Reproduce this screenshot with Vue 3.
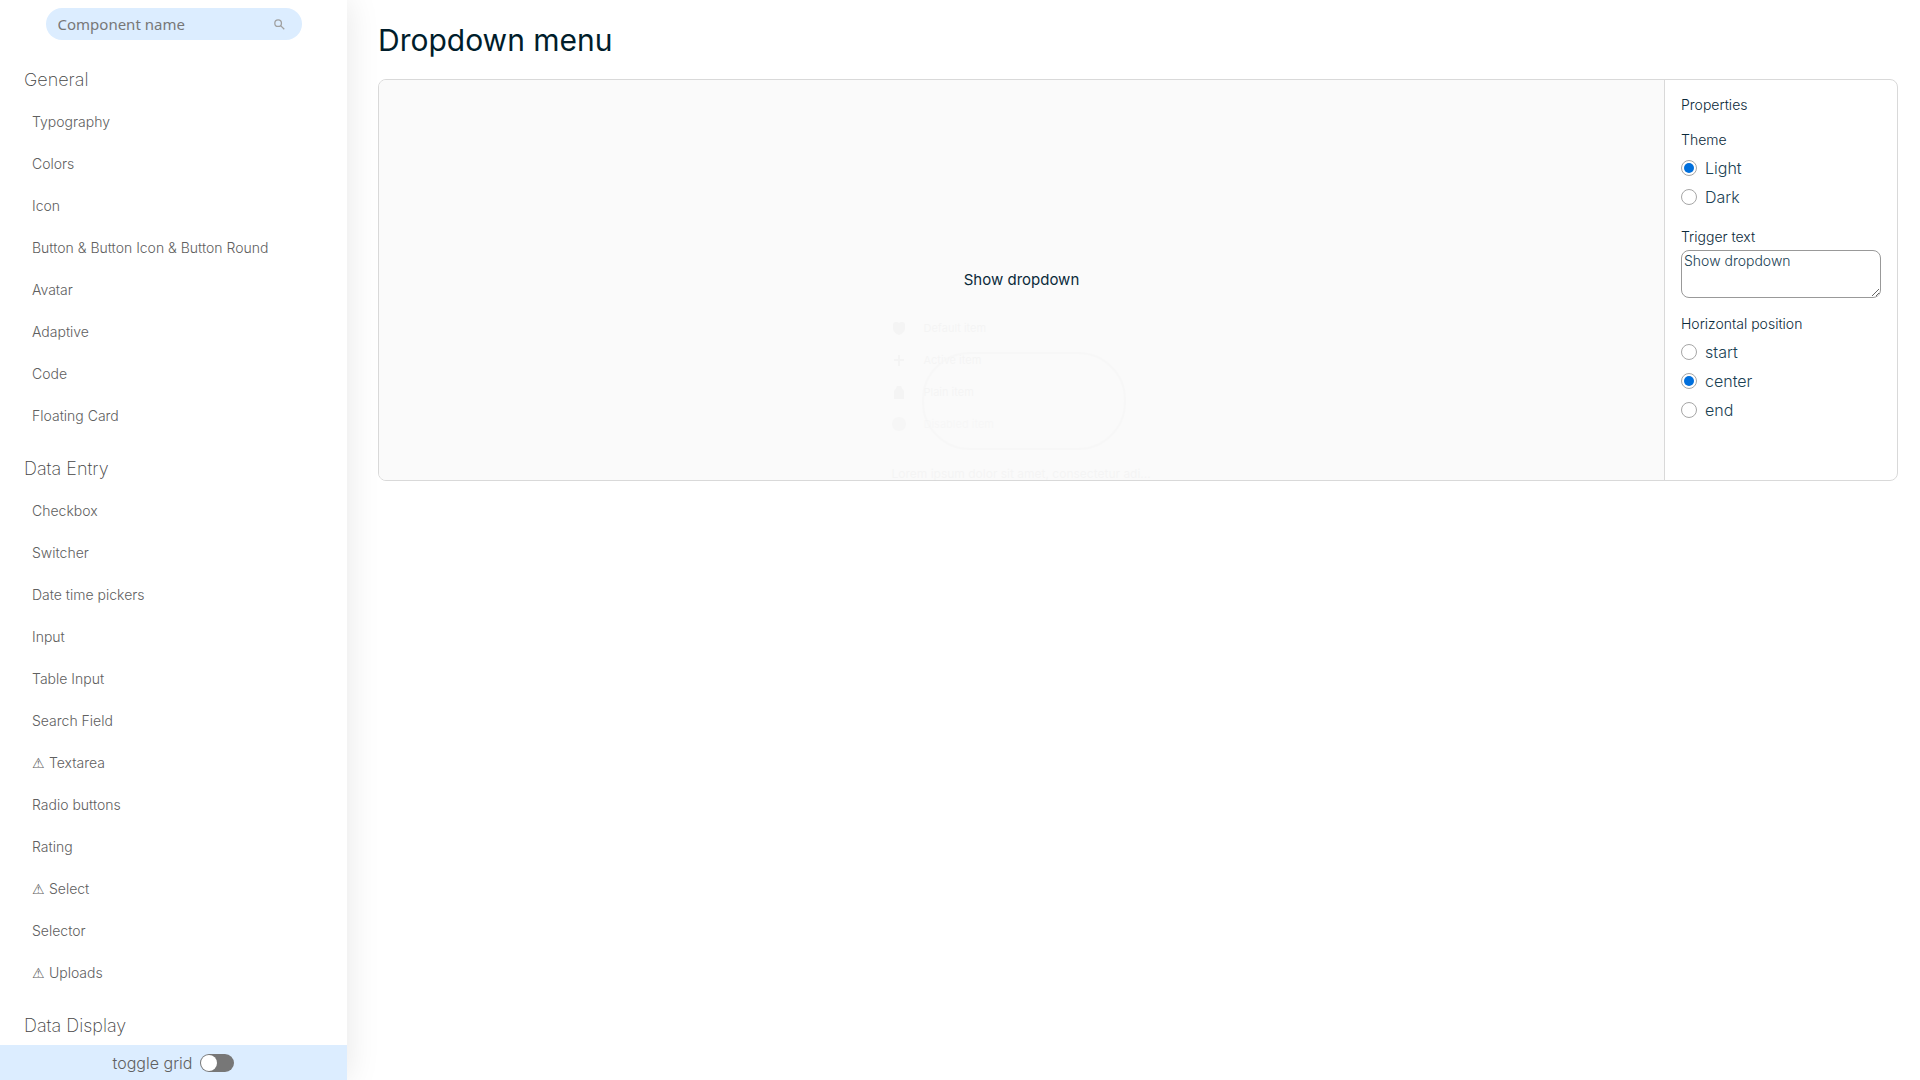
<script setup>
import { ref } from 'vue'

const groups = [
  {
    title: 'General',
    items: ['Typography', 'Colors', 'Icon', 'Button & Button Icon & Button Round', 'Avatar', 'Adaptive', 'Code', 'Floating Card'],
  },
  {
    title: 'Data Entry',
    items: ['Checkbox', 'Switcher', 'Date time pickers', 'Input', 'Table Input', 'Search Field', '⚠ Textarea', 'Radio buttons', 'Rating', '⚠ Select', 'Selector', '⚠ Uploads'],
  },
  { title: 'Data Display', items: [] },
]

const search = ref('')
const grid = ref(false)
const theme = ref('Light')
const trigger = ref('Show dropdown')
const position = ref('center')
</script>

<template>
  <div class="layout">
    <aside class="sidebar">
      <div class="search">
        <input v-model="search" type="text" placeholder="Component name" aria-label="Component name">
        <svg class="search-icon" viewBox="0 0 12 12" aria-hidden="true">
          <circle cx="4.5" cy="4.5" r="3.6" />
          <path d="M7.2 7.2L11.2 11.2" />
        </svg>
      </div>
      <nav class="nav">
        <section v-for="group in groups" :key="group.title">
          <h2>{{ group.title }}</h2>
          <a v-for="item in group.items" :key="item" href="#"><span v-if="item.startsWith('⚠')" class="warning">⚠</span>{{ item.replace('⚠', '') }}</a>
        </section>
      </nav>
      <label class="grid-toggle">
        toggle grid
        <input v-model="grid" type="checkbox">
      </label>
    </aside>

    <main class="content">
      <h1>Dropdown menu</h1>
      <div class="playground">
        <div class="stage">
          <div class="dropdown">
            <button type="button" class="trigger">{{ trigger }}</button>
            <div class="menu" aria-hidden="true">
              <div class="row">
                <svg viewBox="0 0 14 14"><path d="M1 4Q1 1 4 1Q6 1 7 2Q8 1 10 1Q13 1 13 4V8Q12 12 7 14Q2 12 1 8Z" /></svg>
                Default item
              </div>
              <div class="row">
                <svg viewBox="0 0 14 14"><path d="M6 2h2v4h4v2H8v5H6V8H2V6h4z" /></svg>
                Active item
              </div>
              <div class="row">
                <svg viewBox="0 0 14 14"><path d="M2 14V6Q4 4 5 1H9Q10 4 12 6V14Z" /></svg>
                Plain item
              </div>
              <div class="row disabled">
                <svg viewBox="0 0 14 14"><circle cx="7" cy="7" r="7" /></svg>
                Disabled item
              </div>
              <div class="note">Lorem ipsum dolor sit amet, consectetur adi...</div>
            </div>
          </div>
        </div>
        <form class="props">
          <h3>Properties</h3>
          <fieldset>
            <legend>Theme</legend>
            <label v-for="name in ['Light', 'Dark']" :key="name" class="radio">
              <input v-model="theme" type="radio" name="theme" :value="name">
              {{ name }}
            </label>
          </fieldset>
          <div class="field">
            <label for="trigger-text">Trigger text</label>
            <textarea id="trigger-text" v-model="trigger"></textarea>
          </div>
          <fieldset>
            <legend>Horizontal position</legend>
            <label v-for="name in ['start', 'center', 'end']" :key="name" class="radio">
              <input v-model="position" type="radio" name="position" :value="name">
              {{ name }}
            </label>
          </fieldset>
        </form>
      </div>
    </main>
  </div>
</template>

<style>
body {
  margin: 0;
  background: #fff;
}
</style>

<style scoped>
* {
  box-sizing: border-box;
}

.layout {
  display: flex;
  height: 100vh;
  overflow: hidden;
  font-family: Inter, "DejaVu Sans", sans-serif;
  color: #0b2a3a;
}

.sidebar {
  display: flex;
  flex-direction: column;
  flex: 0 0 347px;
  box-shadow: 0 0 32px rgba(0, 0, 0, 0.1);
  color: #606060;
}

.search {
  display: flex;
  align-items: center;
  flex-shrink: 0;
  width: 256px;
  height: 32px;
  margin: 8px auto;
  padding: 0 17px 0 12px;
  border-radius: 16px;
  background: #dcedff;
}

.search input {
  flex: 1;
  min-width: 0;
  padding: 0;
  border: 0;
  outline: 0;
  background: none;
  font: 15px "Noto Sans", sans-serif;
  color: #333;
}

.search input::placeholder {
  color: #777;
}

.search-icon {
  width: 11px;
  height: 11px;
  fill: none;
  stroke: #a0a0a0;
  stroke-width: 1.4;
}

.nav {
  flex: 1;
  min-height: 0;
  overflow: hidden;
}

section {
  padding-top: 11px;
}

h2 {
  margin: 0;
  padding-left: 24px;
  font-size: 18px;
  font-weight: 200;
  line-height: 42px;
  color: #444;
}

.nav a {
  display: block;
  height: 42px;
  padding-left: 32px;
  font-size: 14px;
  font-weight: 350;
  line-height: 42px;
  color: inherit;
  text-decoration: none;
}

.warning {
  font-family: "DejaVu Sans", sans-serif;
}

.grid-toggle {
  display: flex;
  align-items: center;
  justify-content: center;
  flex: 0 0 35px;
  gap: 8px;
  background: #dcedff;
  font-size: 16px;
  font-weight: 350;
}

.grid-toggle input {
  appearance: none;
  width: 34px;
  height: 18px;
  margin: 0;
  padding: 1px;
  border-radius: 9px;
  background: #777;
}

.grid-toggle input::before {
  content: "";
  display: block;
  width: 16px;
  height: 16px;
  border-radius: 50%;
  background: #fff;
}

.grid-toggle input:checked::before {
  margin-left: auto;
}

.content {
  flex: 1;
  min-width: 0;
  padding: 20px 22px 0 31px;
}

h1 {
  margin: 0 0 19px;
  font-size: 30px;
  font-weight: 400;
  line-height: 40px;
  color: #001d2b;
}

.playground {
  display: flex;
  min-height: 402px;
  border: 1px solid #d9d9d9;
  border-radius: 8px;
}

.stage {
  display: flex;
  align-items: center;
  justify-content: center;
  flex: 1;
  border-radius: 7px 0 0 7px;
  background: #fafafa;
}

.dropdown {
  position: relative;
}

.trigger {
  display: block;
  padding: 0;
  border: 0;
  background: none;
  font: inherit;
  font-size: 15px;
  line-height: 24px;
  color: #0b2a3a;
}

.menu {
  position: absolute;
  top: 28px;
  left: 50%;
  width: 296px;
  margin-left: -148px;
  padding: 16px 18px;
  opacity: 0.02;
  font-size: 11px;
  color: #000;
}

/* soft inner halo of the fading menu */
.menu::before {
  content: "";
  position: absolute;
  top: 56px;
  left: 48px;
  width: 200px;
  height: 94px;
  border: 2px solid rgba(0, 0, 0, 0.4);
  border-radius: 48px;
}

.row {
  display: flex;
  align-items: center;
  gap: 18px;
  height: 32px;
}

.row svg {
  width: 14px;
  height: 14px;
}

.disabled {
  opacity: 0.6;
}

.note {
  margin-top: 18px;
  font-size: 12px;
  line-height: 32px;
  white-space: nowrap;
}

.props {
  flex: 0 0 233px;
  padding: 15px 16px 16px;
  border-left: 1px solid #d9d9d9;
  font-size: 14px;
}

h3 {
  margin: 0 0 15px;
  font-size: 14px;
  font-weight: 400;
  line-height: 20px;
}

fieldset {
  margin: 0 0 16px;
  padding: 0;
  border: 0;
}

legend {
  margin-bottom: 3px;
  padding: 0;
  line-height: 20px;
}

.radio {
  display: flex;
  align-items: center;
  gap: 8px;
  height: 29px;
  font-size: 16px;
  color: #1b4254;
}

.radio input {
  appearance: none;
  width: 16px;
  height: 16px;
  margin: 0;
  padding: 2px;
  border: 1px solid #a6a6a6;
  border-radius: 50%;
}

.radio input:checked::before {
  content: "";
  display: block;
  width: 10px;
  height: 10px;
  border-radius: 50%;
  background: #006fdc;
}

.field {
  margin-bottom: 16px;
}

.field label {
  display: block;
  margin-bottom: 3px;
  line-height: 20px;
}

textarea {
  display: block;
  width: 100%;
  height: 48px;
  padding: 2px;
  border: 1px solid #999;
  border-radius: 8px;
  background: #fff;
  font: inherit;
  line-height: 16px;
  color: #1b4254;
}

h3,
.props,
.radio {
  font-weight: 350;
}
</style>
